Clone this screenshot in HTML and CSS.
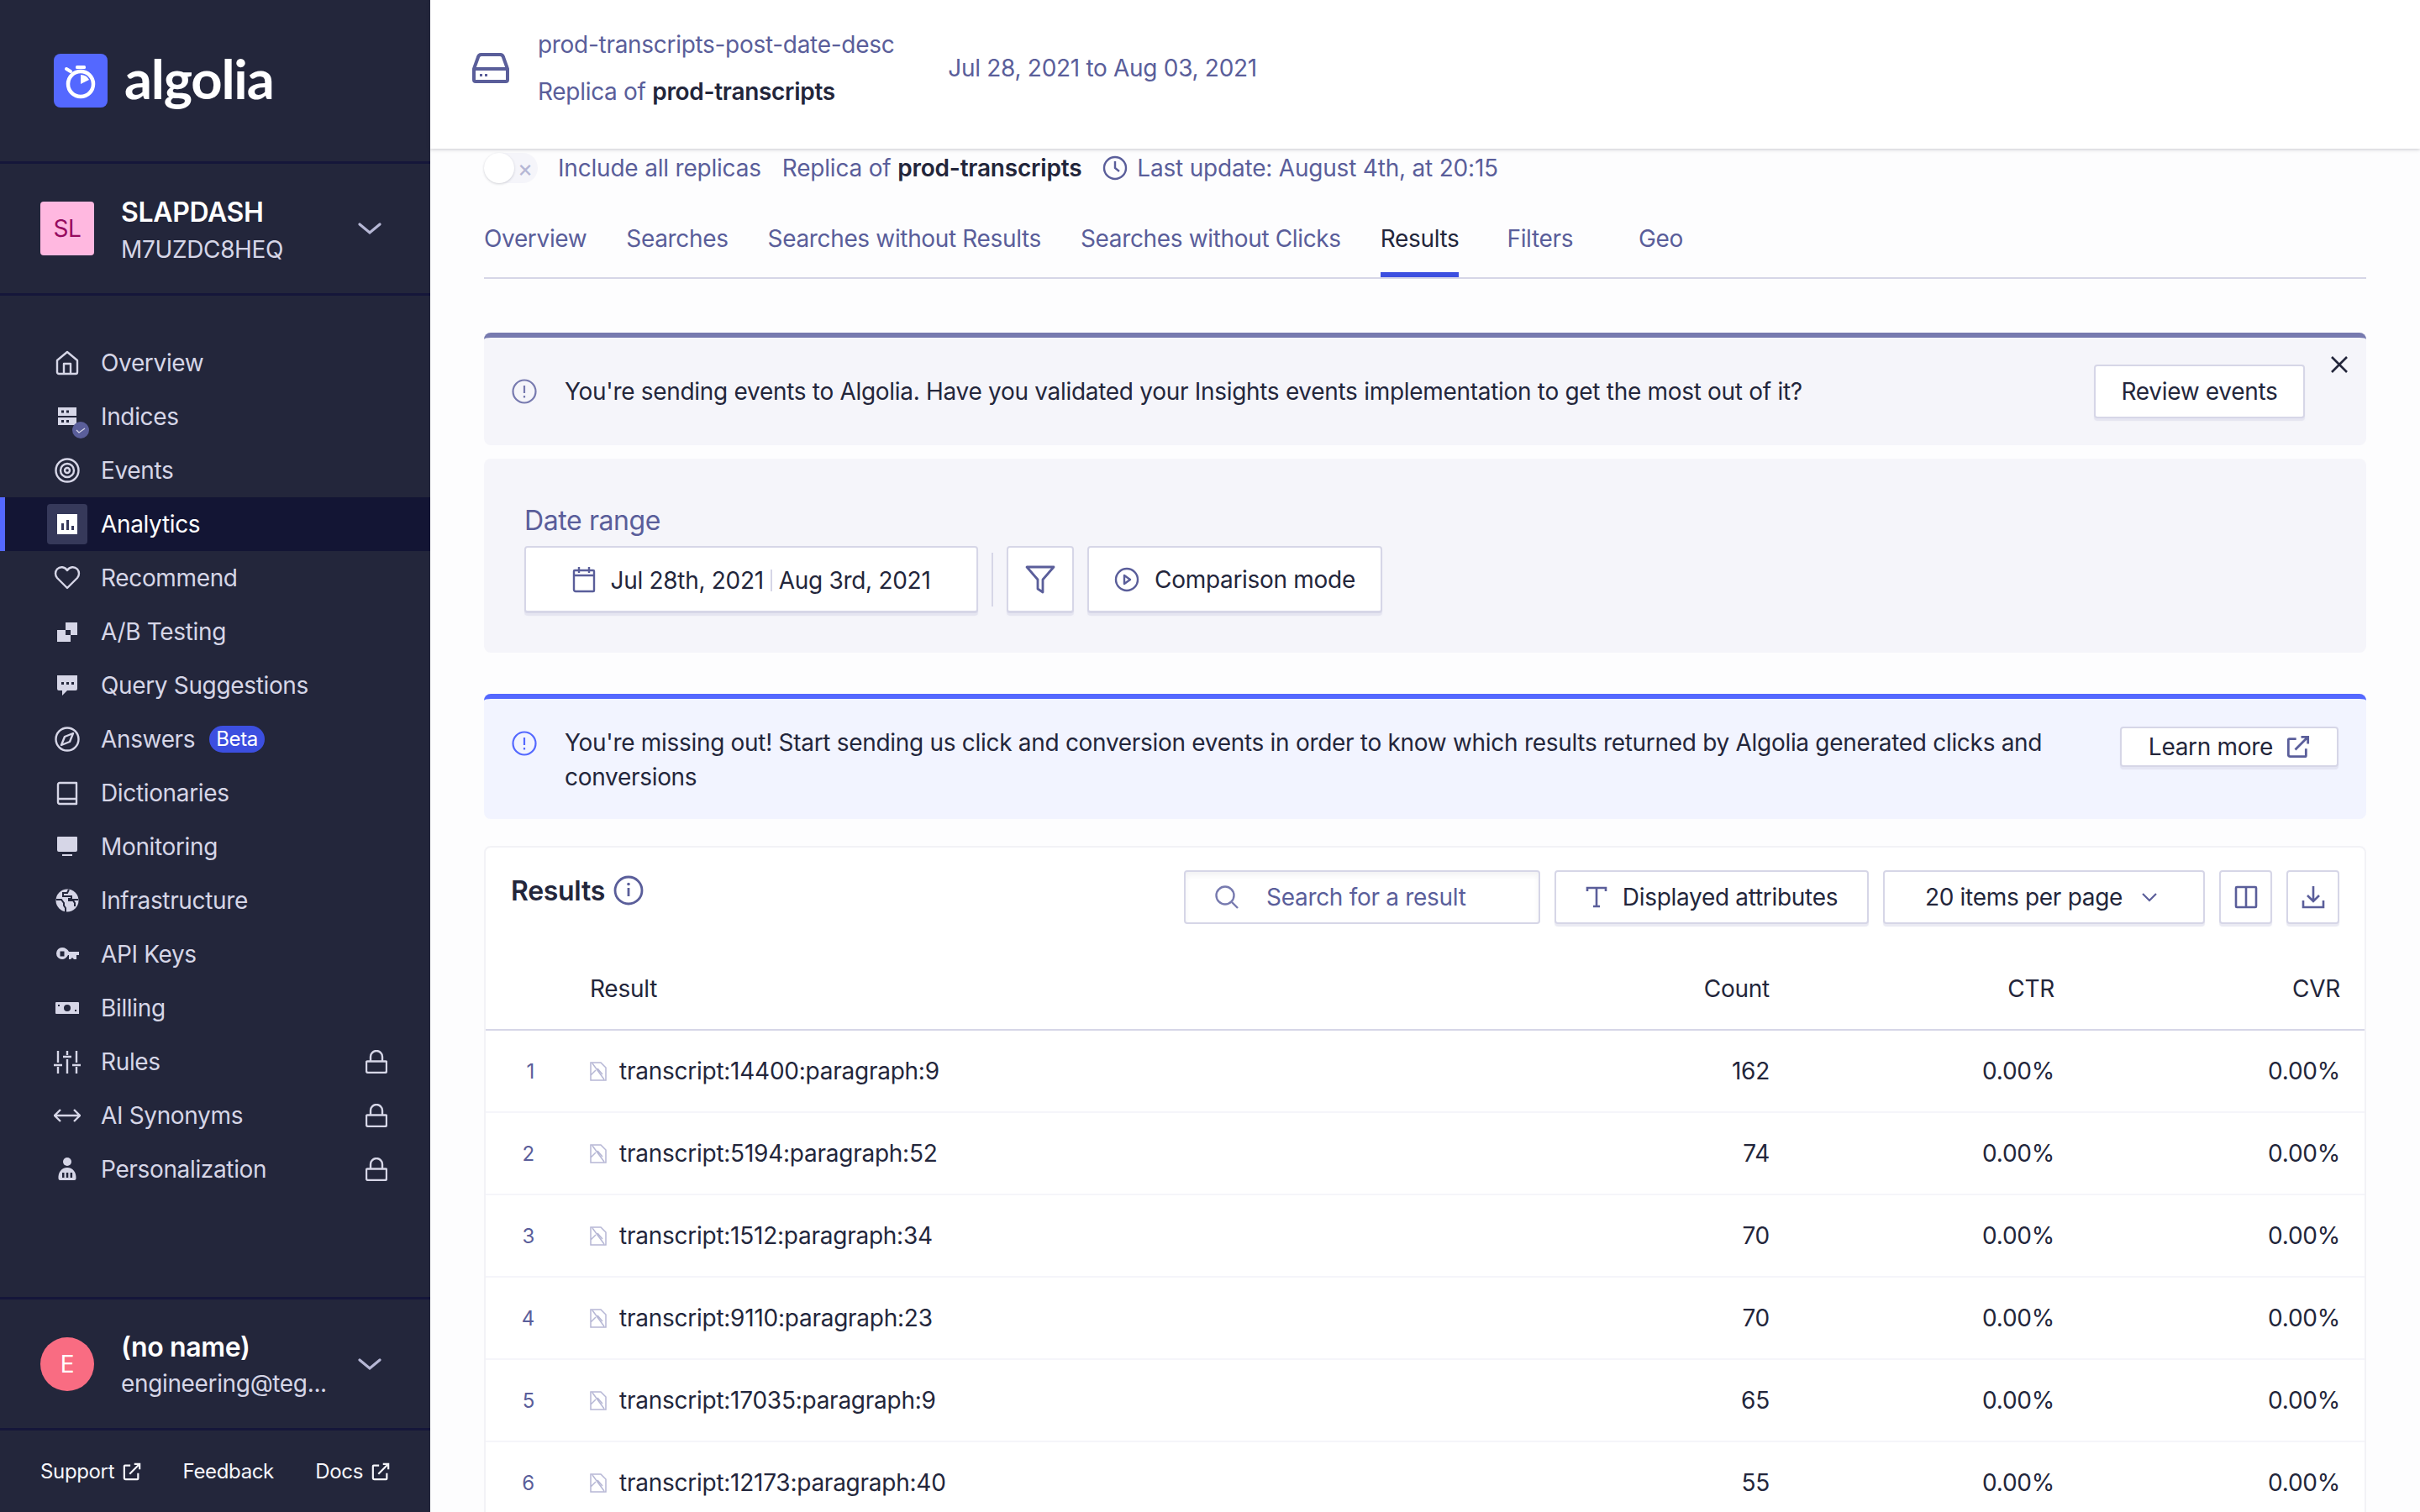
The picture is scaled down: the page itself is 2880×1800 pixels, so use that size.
FILE: index.html
```html
<!DOCTYPE html>
<html>
<head>
	<title>Algolia Analytics</title>
	<meta charset="utf-8">
	<link rel="stylesheet" href="styles.css">
</head>
<body>

	<svg class="defs">
		<symbol id="lock" viewBox="0 0 26 28"><path d="M2 13.5h22a1 1 0 0 1 1 1V25a2 2 0 0 1-2 2H3a2 2 0 0 1-2-2V14.500a1 1 0 0 1 1-1zM6 13V8a7 7 0 0 1 14 0v5" fill="none" stroke="currentColor" stroke-width="2.400"/></symbol>
		<symbol id="ext" viewBox="0 0 24 24"><path d="M10 4H3a1 1 0 0 0-1 1v15a2 2 0 0 0 2 2h15a1 1 0 0 0 1-1v-7M9 15 22 2M15 2h7v7" fill="none" stroke="currentColor" stroke-width="2.400"/></symbol>
		<symbol id="chev" viewBox="0 0 28 16"><path d="M2 3l12 10L26 3" fill="none" stroke="currentColor" stroke-width="3.200" stroke-linecap="round"/></symbol>
		<symbol id="nosnip" viewBox="0 0 20 24"><path d="M1 5v18h18V8l-6-6H1zM3 3l14 19M9 9l6 7M1 17l6-6" fill="none" stroke="currentColor" stroke-width="1.500"/></symbol>
	</svg>

	<div class="sidebar">
		<div class="logo_box">
			<div class="logo_mark">
				<svg viewBox="0 0 64 64" width="64" height="64"><circle cx="32" cy="36" r="15" fill="none" stroke="#fff" stroke-width="4.500"/><path d="M32 36V25a11 11 0 0 1 10 6z" fill="#fff"/><rect x="26" y="14" width="12" height="4" rx="1.500" fill="#fff"/><path d="M15 18l5 3" stroke="#fff" stroke-width="4" stroke-linecap="round"/></svg>
			</div>
			<span class="logo_text">algolia</span>
		</div>

		<div class="org_box">
			<div class="org_avatar">SL</div>
			<div class="org_text">
				<div class="org_name">SLAPDASH</div>
				<div class="org_id">M7UZDC8HEQ</div>
			</div>
			<svg class="chevron" width="28" height="16"><use href="#chev"/></svg>
		</div>

		<div class="nav">
			<div class="nav_item">
				<span class="nav_icon"><svg viewBox="0 0 32 32" width="32" height="32"><path d="M4 13 16 3l12 10v14a2 2 0 0 1-2 2H6a2 2 0 0 1-2-2zM12 29V17h8v12" fill="none" stroke="currentColor" stroke-width="2.400" stroke-linejoin="round"/></svg></span>
				Overview
			</div>
			<div class="nav_item">
				<span class="nav_icon"><svg viewBox="0 0 32 32" width="32" height="32"><path fill-rule="evenodd" fill="currentColor" d="M5 5h22v10H5zM9 8.500v3h3v-3zM15 8.500v3h3v-3zM5 17h22v9H5zM9 20v3h3v-3zM15 20v3h3v-3z"/></svg><span class="nav_badge"><svg viewBox="0 0 20 16" width="20" height="16"><path d="M5 8l3 3 7-5" fill="none" stroke="#d6d6e7" stroke-width="1.300"/></svg></span></span>
				Indices
			</div>
			<div class="nav_item">
				<span class="nav_icon"><svg viewBox="0 0 32 32" width="32" height="32"><g fill="none" stroke="currentColor" stroke-width="2.400"><circle cx="16" cy="16" r="13.500"/><circle cx="16" cy="16" r="8"/><circle cx="16" cy="16" r="3"/></g></svg></span>
				Events
			</div>
			<div class="nav_item nav_active">
				<span class="nav_icon"><svg viewBox="0 0 24 24" width="24" height="24"><path fill="#fff" fill-rule="evenodd" d="M0 0h24v24H0zM5 11v8h3v-8zM11 7v12h3V7zM17 14v5h3v-5z"/></svg></span>
				Analytics
			</div>
			<div class="nav_item">
				<span class="nav_icon"><svg viewBox="0 0 32 32" width="32" height="32"><path d="M16 28 4 16a8 8 0 0 1 0-10.500c3.500-3.500 9-3 12 1.500 3-4.500 8.500-5 12-1.500a8 8 0 0 1 0 10.500z" fill="none" stroke="currentColor" stroke-width="2.400" stroke-linejoin="round"/></svg></span>
				Recommend
			</div>
			<div class="nav_item">
				<span class="nav_icon"><svg viewBox="0 0 32 32" width="32" height="32"><path fill="currentColor" fill-rule="evenodd" d="M14 5h14v15h-8v8H4V14h10zM14 14v6h6v-6z"/></svg></span>
				A/B Testing
			</div>
			<div class="nav_item">
				<span class="nav_icon"><svg viewBox="0 0 32 32" width="32" height="32"><path fill="currentColor" fill-rule="evenodd" d="M4 4h24v16a2 2 0 0 1-2 2H16l-6 6v-6H6a2 2 0 0 1-2-2zM9 12v3h3v-3zM15 12v3h3v-3zM21 12v3h3v-3z"/></svg></span>
				Query Suggestions
			</div>
			<div class="nav_item">
				<span class="nav_icon"><svg viewBox="0 0 32 32" width="32" height="32"><circle cx="16" cy="16" r="13.500" fill="none" stroke="currentColor" stroke-width="2.400"/><path d="M23 9l-10 4-4 10 10-4z" fill="none" stroke="currentColor" stroke-width="2.400" stroke-linejoin="round"/></svg></span>
				Answers <span class="beta">Beta</span>
			</div>
			<div class="nav_item">
				<span class="nav_icon"><svg viewBox="0 0 32 32" width="32" height="32"><path d="M7 4h20v25H7a2 2 0 0 1-2-2V6a2 2 0 0 1 2-2zM5 23h22" fill="none" stroke="currentColor" stroke-width="2.400" stroke-linejoin="round"/></svg></span>
				Dictionaries
			</div>
			<div class="nav_item">
				<span class="nav_icon"><svg viewBox="0 0 32 32" width="32" height="32"><path fill="currentColor" d="M5 4h22a1 1 0 0 1 1 1v15a2 2 0 0 1-2 2H6a2 2 0 0 1-2-2V5a1 1 0 0 1 1-1zM10 25h12v2H10z"/></svg></span>
				Monitoring
			</div>
			<div class="nav_item">
				<span class="nav_icon"><svg viewBox="0 0 32 32" width="32" height="32"><circle cx="16" cy="16" r="13.500" fill="currentColor"/><path d="M3 15h6l3 4v3l2 3v5M18 3l-2 4h-5v4h10v3h-3v2h5l2 3v4M21 15h8" fill="none" stroke="#23263b" stroke-width="2"/></svg></span>
				Infrastructure
			</div>
			<div class="nav_item">
				<span class="nav_icon"><svg viewBox="0 0 32 32" width="32" height="32"><path fill="currentColor" fill-rule="evenodd" d="M10 8c3.500 0 6.500 2 8 5h12v4h-3v5h-3l-2-2-2 2h-2v-5h-1c-1.500 3-4.500 5-7 5a7 7 0 0 1 0-14zM7.500 12.500v6h5v-6z"/></svg></span>
				API Keys
			</div>
			<div class="nav_item">
				<span class="nav_icon"><svg viewBox="0 0 32 32" width="32" height="32"><path fill="currentColor" fill-rule="evenodd" d="M3 9h26a1 1 0 0 1 1 1v13H3a1 1 0 0 1-1-1V10a1 1 0 0 1 1-1zM16 12a4 4 0 1 0 0 8 4 4 0 0 0 0-8zM5 12v2h2v-2zM25 18v2h2v-2z"/></svg></span>
				Billing
			</div>
			<div class="nav_item">
				<span class="nav_icon"><svg viewBox="0 0 32 32" width="32" height="32"><path d="M5 3v14M5 22v8M16 3v5M16 13v17M27 3v14M27 22v8M0 20h10M11 10h10M22 20h10" fill="none" stroke="currentColor" stroke-width="2.400"/></svg></span>
				Rules
				<svg class="nav_lock" width="26" height="28"><use href="#lock"/></svg>
			</div>
			<div class="nav_item">
				<span class="nav_icon"><svg viewBox="0 0 32 32" width="32" height="32"><path d="M1 16h30M8 9l-7 7 7 7M24 9l7 7-7 7" fill="none" stroke="currentColor" stroke-width="2.400"/></svg></span>
				AI Synonyms
				<svg class="nav_lock" width="26" height="28"><use href="#lock"/></svg>
			</div>
			<div class="nav_item">
				<span class="nav_icon"><svg viewBox="0 0 32 32" width="32" height="32"><circle cx="16" cy="7" r="5" fill="currentColor"/><path fill="currentColor" fill-rule="evenodd" d="M16 14c7 0 11 6 10.500 13a2 2 0 0 1-2 2h-17a2 2 0 0 1-2-2C5 20 9 14 16 14zM10 20v6h2.500v-6zM14.800 20v6h2.500v-6zM19.600 20v6h2.500v-6z"/></svg></span>
				Personalization
				<svg class="nav_lock" width="26" height="28"><use href="#lock"/></svg>
			</div>
		</div>

		<div class="user_box">
			<div class="user_avatar">E</div>
			<div class="user_text">
				<div class="user_name">(no name)</div>
				<div class="user_mail">engineering@teg...</div>
			</div>
			<svg class="chevron" width="28" height="16"><use href="#chev"/></svg>
		</div>

		<div class="foot_links">
			<span class="foot_link">Support <svg width="22" height="22"><use href="#ext"/></svg></span>
			<span class="foot_link">Feedback</span>
			<span class="foot_link">Docs <svg width="22" height="22"><use href="#ext"/></svg></span>
		</div>
	</div>

	<div class="main">
		<div class="topbar">
			<svg class="top_icon" viewBox="0 0 44 36" width="44" height="36"><path d="M2 19 7 5a4 4 0 0 1 4-3h22a4 4 0 0 1 4 3l5 14v13a2 2 0 0 1-2 2H4a2 2 0 0 1-2-2zM2 19h40" fill="none" stroke="#5a5e9a" stroke-width="4" stroke-linejoin="round"/><path d="M9 25h3v3H9zM15 25h3v3h-3z" fill="#5a5e9a"/></svg>
			<div class="top_names">
				<div>prod-transcripts-post-date-desc</div>
				<div>Replica of <b>prod-transcripts</b></div>
			</div>
			<div class="top_date">Jul 28, 2021 to Aug 03, 2021</div>
		</div>

		<div class="content">
			<div class="meta_row">
				<span class="toggle"><span class="toggle_knob"></span><span class="toggle_x">×</span></span>
				<span class="meta_include">Include all replicas</span>
				<span class="meta_replica">Replica of <b>prod-transcripts</b></span>
				<span class="meta_update">
					<svg viewBox="0 0 30 30" width="30" height="30"><circle cx="15" cy="15" r="13" fill="none" stroke="#5a5e9a" stroke-width="2.400"/><path d="M15 7v8l5 4" fill="none" stroke="#5a5e9a" stroke-width="2.400"/></svg>
					Last update: August 4th, at 20:15
				</span>
			</div>

			<div class="tabs">
				<span class="tab">Overview</span>
				<span class="tab">Searches</span>
				<span class="tab">Searches without Results</span>
				<span class="tab">Searches without Clicks</span>
				<span class="tab tab_active">Results</span>
				<span class="tab tab_wide">Filters</span>
				<span class="tab">Geo</span>
			</div>

			<div class="alert alert_grey">
				<svg class="alert_icon" viewBox="0 0 30 30" width="30" height="30"><circle cx="15" cy="15" r="13.500" fill="none" stroke="#777aaf" stroke-width="2.200"/><path d="M15 8v9M15 20v2.500" fill="none" stroke="#777aaf" stroke-width="2.200"/></svg>
				<div class="alert_text">You're sending events to Algolia. Have you validated your Insights events implementation to get the most out of it?</div>
				<span class="btn btn_review">Review events</span>
				<svg class="alert_close" viewBox="0 0 20 20" width="20" height="20"><path d="M1 1l18 18M19 1 1 19" stroke="#23263b" stroke-width="2.600" fill="none"/></svg>
			</div>

			<div class="date_panel">
				<div class="date_label">Date range</div>
				<div class="date_controls">
					<span class="btn btn_date">
						<svg viewBox="0 0 28 32" width="28" height="32"><path d="M3 5h22a1 1 0 0 1 1 1v23a1 1 0 0 1-1 1H4a2 2 0 0 1-2-2V6a1 1 0 0 1 1-1zM2 11h24M8 1v7M20 1v7" fill="none" stroke="#5a5e9a" stroke-width="2.400"/></svg>
						<span class="date_range">Jul 28th, 2021<i class="date_sep"></i>Aug 3rd, 2021</span>
					</span>
					<i class="ctrl_sep"></i>
					<span class="btn btn_filter">
						<svg viewBox="0 0 36 34" width="36" height="34"><path d="M2 2h32L21 17v15l-6-4V17z" fill="none" stroke="#5a5e9a" stroke-width="2.800" stroke-linejoin="round"/></svg>
					</span>
					<span class="btn btn_compare">
						<svg viewBox="0 0 30 30" width="30" height="30"><circle cx="15" cy="15" r="13" fill="none" stroke="#5a5e9a" stroke-width="2.400"/><path d="M12 10l7 5-7 5z" fill="none" stroke="#5a5e9a" stroke-width="2.400" stroke-linejoin="round"/></svg>
						Comparison mode
					</span>
				</div>
			</div>

			<div class="alert alert_blue">
				<svg class="alert_icon" viewBox="0 0 30 30" width="30" height="30"><circle cx="15" cy="15" r="13.500" fill="none" stroke="#5468ff" stroke-width="2.200"/><path d="M15 8v9M15 20v2.500" fill="none" stroke="#5468ff" stroke-width="2.200"/></svg>
				<div class="alert_text">You're missing out! Start sending us click and conversion events in order to know which results returned by Algolia generated clicks and conversions</div>
				<span class="btn btn_learn">Learn more <svg class="learn_icon" width="28" height="28"><use href="#ext"/></svg></span>
			</div>

			<div class="card">
				<div class="card_head">
					<div class="card_title">Results
						<svg viewBox="0 0 36 36" width="36" height="36"><circle cx="18" cy="18" r="16" fill="none" stroke="#5a5e9a" stroke-width="2.800"/><path d="M18 15v10" stroke="#5a5e9a" stroke-width="2.800"/><circle cx="18" cy="10.500" r="1.800" fill="#5a5e9a"/></svg>
					</div>
					<div class="search_box">
						<svg viewBox="0 0 30 30" width="30" height="30"><circle cx="13" cy="13" r="10.500" fill="none" stroke="#777aaf" stroke-width="2.400"/><path d="M21 21l7 7" stroke="#777aaf" stroke-width="2.400"/></svg>
						<span>Search for a result</span>
					</div>
					<span class="btn btn_attrs">
						<svg viewBox="0 0 26 26" width="26" height="26"><path d="M2 6V2h22v4M13 2v22M9 24h8" fill="none" stroke="#5a5e9a" stroke-width="2.600"/></svg>
						Displayed attributes
					</span>
					<span class="btn btn_items">
						20 items per page
						<svg viewBox="0 0 20 12" width="20" height="12"><path d="M2 2l8 8 8-8" fill="none" stroke="#5a5e9a" stroke-width="2.200"/></svg>
					</span>
					<span class="btn btn_square">
						<svg viewBox="0 0 28 28" width="28" height="28"><path d="M3 2h22a1 1 0 0 1 1 1v22a1 1 0 0 1-1 1H3a1 1 0 0 1-1-1V3a1 1 0 0 1 1-1zM14 2v24" fill="none" stroke="#5a5e9a" stroke-width="2.600"/></svg>
					</span>
					<span class="btn btn_square">
						<svg viewBox="0 0 28 28" width="28" height="28"><path d="M14 1v18M7 12l7 7 7-7M2 18v8h24v-8" fill="none" stroke="#5a5e9a" stroke-width="2.600"/></svg>
					</span>
				</div>

				<table class="result_table">
					<tr>
						<th class="col_pos"></th>
						<th class="col_name">Result</th>
						<th class="col_num">Count</th>
						<th class="col_num">CTR</th>
						<th class="col_num col_last">CVR</th>
					</tr>
					<tr>
						<td class="col_pos">1</td>
						<td class="col_name"><svg class="row_icon" width="20" height="24"><use href="#nosnip"/></svg>transcript:14400:paragraph:9</td>
						<td class="col_num">162</td>
						<td class="col_num">0.00%</td>
						<td class="col_num col_last">0.00%</td>
					</tr>
					<tr>
						<td class="col_pos">2</td>
						<td class="col_name"><svg class="row_icon" width="20" height="24"><use href="#nosnip"/></svg>transcript:5194:paragraph:52</td>
						<td class="col_num">74</td>
						<td class="col_num">0.00%</td>
						<td class="col_num col_last">0.00%</td>
					</tr>
					<tr>
						<td class="col_pos">3</td>
						<td class="col_name"><svg class="row_icon" width="20" height="24"><use href="#nosnip"/></svg>transcript:1512:paragraph:34</td>
						<td class="col_num">70</td>
						<td class="col_num">0.00%</td>
						<td class="col_num col_last">0.00%</td>
					</tr>
					<tr>
						<td class="col_pos">4</td>
						<td class="col_name"><svg class="row_icon" width="20" height="24"><use href="#nosnip"/></svg>transcript:9110:paragraph:23</td>
						<td class="col_num">70</td>
						<td class="col_num">0.00%</td>
						<td class="col_num col_last">0.00%</td>
					</tr>
					<tr>
						<td class="col_pos">5</td>
						<td class="col_name"><svg class="row_icon" width="20" height="24"><use href="#nosnip"/></svg>transcript:17035:paragraph:9</td>
						<td class="col_num">65</td>
						<td class="col_num">0.00%</td>
						<td class="col_num col_last">0.00%</td>
					</tr>
					<tr>
						<td class="col_pos">6</td>
						<td class="col_name"><svg class="row_icon" width="20" height="24"><use href="#nosnip"/></svg>transcript:12173:paragraph:40</td>
						<td class="col_num">55</td>
						<td class="col_num">0.00%</td>
						<td class="col_num col_last">0.00%</td>
					</tr>
				</table>
			</div>
		</div>
	</div>

</body>
</html>
```

FILE: styles.css
```css
* {
	margin: 0px;
	box-sizing: border-box;
}
body {
	display: flex;
	height: 1800px;
	overflow: hidden;
	background-color: #fdfdfe;
	color: #23263b;
	font-family: "Inter", "Liberation Sans", sans-serif;
	font-size: 28px;
	letter-spacing: -0.3px;
}
b {
	font-weight: 600;
}
.defs {
	display: none;
}

/* sidebar */
.sidebar {
	display: flex;
	flex-direction: column;
	flex: 0 0 512px;
	height: 1800px;
	background-color: #23263b;
	color: #d6d6e7;
	letter-spacing: -0.35px;
}
.logo_box {
	display: flex;
	align-items: center;
	gap: 20px;
	height: 195px;
	padding-left: 64px;
	border-bottom: 3px solid #15163a;
}
.logo_mark {
	width: 64px;
	height: 64px;
	border-radius: 8px;
	background-color: #5468ff;
}
.logo_text {
	margin-top: -7px;
	color: white;
	font-family: "Lato", sans-serif;
	font-size: 65px;
	font-weight: 700;
	line-height: 64px;
	letter-spacing: -1.2px;
}
.org_box {
	display: flex;
	align-items: center;
	height: 157px;
	padding-left: 48px;
	border-bottom: 3px solid #15163a;
}
.org_avatar {
	display: flex;
	align-items: center;
	justify-content: center;
	width: 64px;
	height: 64px;
	border-radius: 4px;
	background-color: #ffb8e0;
	color: #960a5f;
	font-size: 28px;
}
.org_text {
	margin-left: 32px;
	padding-top: 5px;
	flex: 1;
}
.org_name {
	color: white;
	font-size: 32px;
	font-weight: 600;
	line-height: 44px;
}
.org_id {
	color: #d6d6e7;
	font-size: 28px;
	line-height: 44px;
}
.chevron {
	margin-right: 58px;
	color: #b6b7d5;
}
.nav {
	padding-top: 48px;
}
.nav_item {
	display: flex;
	align-items: center;
	height: 64px;
	padding-left: 56px;
	font-size: 28px;
}
.nav_icon {
	position: relative;
	display: flex;
	align-items: center;
	justify-content: center;
	width: 48px;
	height: 48px;
	margin-right: 16px;
	border-radius: 4px;
}
.nav_badge {
	position: absolute;
	left: 30px;
	top: 30px;
	display: flex;
	width: 20px;
	height: 20px;
	align-items: center;
	border-radius: 50%;
	background-color: #5a5e9a;
}
.nav_active {
	padding-left: 50px;
	border-left: 6px solid #5468ff;
	background-color: #131534;
	color: white;
}
.nav_active .nav_icon {
	background-color: #36395a;
}
.beta {
	height: 32px;
	margin-left: 17px;
	padding: 0 8px;
	border-radius: 16px;
	background-color: #3c4fe0;
	color: white;
	font-size: 24px;
	line-height: 32px;
}
.nav_lock {
	margin-left: auto;
	margin-right: 51px;
}
.user_box {
	display: flex;
	align-items: center;
	height: 159px;
	margin-top: auto;
	padding-left: 48px;
	border-top: 3px solid #15163a;
	border-bottom: 3px solid #15163a;
}
.user_avatar {
	display: flex;
	align-items: center;
	justify-content: center;
	width: 64px;
	height: 64px;
	border-radius: 50%;
	background-color: #f96c82;
	color: white;
	font-size: 28px;
}
.user_text {
	margin-left: 32px;
	padding-top: 3px;
	flex: 1;
}
.user_name {
	color: white;
	font-size: 32px;
	font-weight: 600;
	line-height: 44px;
}
.user_mail {
	font-size: 28px;
	line-height: 42px;
}
.foot_links {
	display: flex;
	align-items: center;
	justify-content: space-between;
	height: 97px;
	padding: 0 48px;
	color: #f5f5fa;
	font-size: 24px;
}
.foot_link {
	display: flex;
	align-items: center;
	gap: 10px;
}

/* main part */
.main {
	flex: 1;
	min-width: 0;
}
.topbar {
	position: relative;
	z-index: 2;
	display: flex;
	align-items: center;
	height: 177px;
	padding-left: 50px;
	padding-bottom: 15px;
	background-color: white;
	box-shadow: 0 1px 4px rgba(35, 38, 59, 0.25);
	color: #5a5e9a;
}
.top_names {
	margin-left: 34px;
	line-height: 56px;
}
.top_names b {
	color: #23263b;
}
.top_date {
	margin-left: 64px;
}
.content {
	padding: 5px 64px 0;
}
.meta_row {
	display: flex;
	align-items: center;
	height: 36px;
	color: #5a5e9a;
	letter-spacing: -0.2px;
}
.meta_row b {
	color: #23263b;
}
.toggle {
	position: relative;
	width: 64px;
	height: 36px;
	border-radius: 18px;
	background-color: #f5f5fa;
}
.toggle_knob {
	position: absolute;
	left: 0;
	top: 0;
	width: 36px;
	height: 36px;
	border-radius: 50%;
	background-color: white;
	box-shadow: 0 1px 3px rgba(35, 38, 59, 0.2);
}
.toggle_x {
	position: absolute;
	right: 6px;
	top: 0;
	color: #b6b7d5;
	font-size: 28px;
	line-height: 36px;
}
.meta_include {
	margin-left: 24px;
}
.meta_replica {
	margin-left: 25px;
}
.meta_update {
	display: flex;
	align-items: center;
	gap: 11px;
	margin-left: 25px;
}
.tabs {
	display: flex;
	gap: 47px;
	margin-top: 46px;
	border-bottom: 2px solid #d6d6e7;
	color: #5a5e9a;
	letter-spacing: -0.35px;
}
.tab {
	padding-bottom: 20px;
	border-bottom: 6px solid transparent;
	line-height: 40px;
}
.tab_active {
	margin-right: 10px;
	border-bottom-color: #3c4fe0;
	color: #23263b;
}
.tab_wide {
	margin-right: 31px;
}
.alert {
	position: relative;
	display: flex;
	border-top: 6px solid;
	border-radius: 8px;
}
.alert_icon {
	flex: none;
	margin: 0 33px;
}
.alert_text {
	flex: 1;
	line-height: 41px;
}
.alert_grey {
	align-items: center;
	height: 134px;
	margin-top: 64px;
	padding-right: 73px;
	border-top-color: #777aaf;
	background-color: #f5f5fa;
}
.alert_close {
	position: absolute;
	right: 22px;
	top: 22px;
}
.alert_blue {
	align-items: flex-start;
	height: 149px;
	margin-top: 49px;
	padding: 32px 33px 0 0;
	border-top-color: #5468ff;
	background-color: #f2f4ff;
}
.alert_blue .alert_icon {
	margin-top: 6px;
}
.btn {
	display: inline-flex;
	align-items: center;
	justify-content: center;
	flex: none;
	height: 64px;
	padding: 0;
	border: 2px solid #d6d6e7;
	border-radius: 4px;
	background-color: white;
	box-shadow: 0 3px 1px rgba(214, 214, 231, 0.5);
	color: #23263b;
	white-space: nowrap;
}
.btn_review {
	width: 251px;
}
.btn_learn {
	width: 260px;
	height: 48px;
	margin-left: 60px;
	margin-top: 1px;
	gap: 16px;
}
.learn_icon {
	color: #5a5e9a;
}
.date_panel {
	height: 231px;
	margin-top: 16px;
	padding: 54px 48px 0;
	border-radius: 8px;
	background-color: #f5f5fa;
}
.date_label {
	color: #5a5e9a;
	font-size: 32px;
	line-height: 40px;
	letter-spacing: -0.4px;
}
.date_controls {
	display: flex;
	align-items: center;
	margin-top: 10px;
}
.date_controls .btn {
	height: 80px;
	border-bottom-width: 3px;
}
.btn_date {
	width: 540px;
	gap: 18px;
}
.date_range {
	display: flex;
	align-items: center;
	padding-top: 3px;
}
.date_sep {
	width: 2px;
	height: 26px;
	margin: 0 8px;
	background-color: #d6d6e7;
}
.ctrl_sep {
	width: 2px;
	height: 64px;
	margin: 0 16px;
	background-color: #d6d6e7;
}
.btn_filter {
	width: 80px;
}
.btn_compare {
	width: 351px;
	margin-left: 16px;
	gap: 18px;
}
.card {
	margin-top: 32px;
	border: 2px solid #f2f2f6;
	border-bottom: 0;
	border-radius: 8px 8px 0 0;
	background-color: white;
}
.card_head {
	display: flex;
	padding: 27px 30px 30px;
	gap: 17px;
}
.card_title {
	display: flex;
	align-items: center;
	gap: 10px;
	height: 48px;
	margin-right: auto;
	font-size: 32px;
	font-weight: 600;
}
.search_box {
	display: flex;
	align-items: center;
	gap: 32px;
	width: 424px;
	height: 64px;
	padding-left: 34px;
	border: 2px solid #d6d6e7;
	border-radius: 4px;
	box-shadow: inset 0 4px 6px rgba(35, 38, 59, 0.06);
	color: #5a5e9a;
}
.btn_attrs {
	width: 374px;
	gap: 18px;
}
.btn_items {
	width: 383px;
	gap: 22px;
	padding-right: 6px;
}
.btn_square {
	width: 63px;
}
.result_table {
	width: 100%;
	border-collapse: collapse;
	table-layout: fixed;
	letter-spacing: -0.25px;
}
.result_table th {
	height: 96px;
	padding-bottom: 3px;
	border-bottom: 2px solid #d6d6e7;
	font-weight: 400;
}
.result_table td {
	height: 98px;
	border-bottom: 2px solid #f5f5fa;
}
.result_table .col_pos {
	width: 123px;
	padding-right: 65px;
	color: #5a5e9a;
	font-size: 24px;
	text-align: right;
}
.col_name {
	text-align: left;
}
.result_table .col_num {
	width: 339px;
	text-align: right;
}
.result_table .col_last {
	width: 368px;
	padding-right: 29px;
}
.row_icon {
	margin-right: 15px;
	color: #b6b7d5;
	vertical-align: -2px;
}
```
